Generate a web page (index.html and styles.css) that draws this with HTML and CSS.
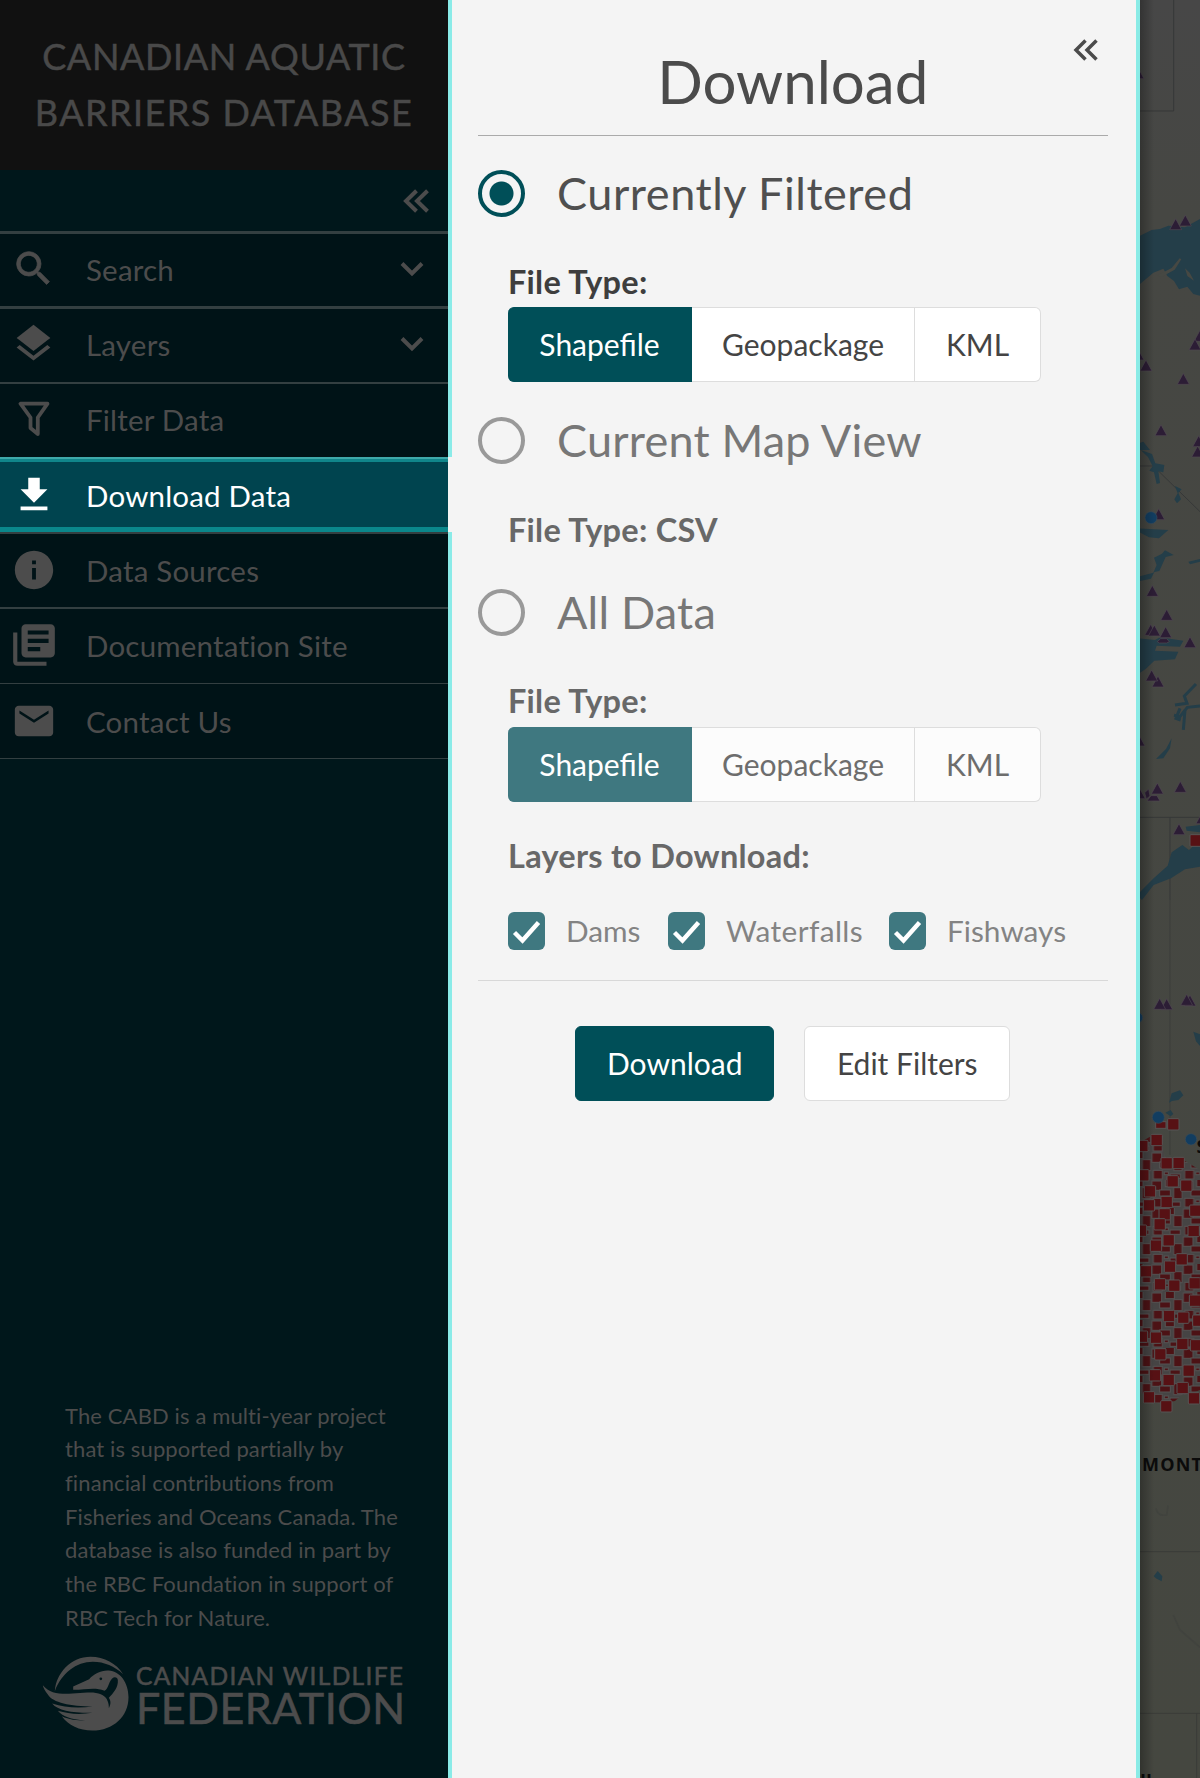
FILE: index.html
```html
<!DOCTYPE html>
<html lang="en">
<head>
<meta charset="utf-8">
<title>Canadian Aquatic Barriers Database</title>
<link rel="stylesheet" href="styles.css">
</head>
<body>
<div class="app">
  <aside class="sidebar">
    <h1 class="brand"><span class="brand-top">CANADIAN AQUATIC</span><span class="brand-bottom">BARRIERS DATABASE</span></h1>
    <div class="collapse">
      <svg width="26" height="24" viewBox="0 0 26 24"><path d="M13.5 1.8 3 12l10.500 10.200M24.500 1.800 14 12l10.500 10.200" fill="none" stroke="currentColor" stroke-width="4"/></svg>
    </div>
    <nav class="menu">
      <a class="item"><span class="icon"><svg width="45" height="45" viewBox="0 0 24 24"><path stroke="currentColor" stroke-width=".4" d="M15.500 14h-.79l-.28-.27A6.471 6.471 0 0 0 16 9.500 6.500 6.500 0 1 0 9.500 16c1.610 0 3.090-.59 4.230-1.570l.27.28v.79l5 4.990L20.490 19l-4.990-5zm-6 0C7.010 14 5 11.990 5 9.500S7.010 5 9.500 5 14 7.010 14 9.500 11.990 14 9.500 14z"/></svg></span><span class="label">Search</span><svg class="chevron" width="24" height="16" viewBox="0 0 24 16"><path d="M2 2.500l10 10 10-10" fill="none" stroke="currentColor" stroke-width="4"/></svg></a>
      <a class="item"><span class="icon"><svg width="45" height="45" viewBox="0 0 24 24"><path d="M11.990 18.540l-7.370-5.730L3 14.070l9 7 9-7-1.630-1.270-7.380 5.740zM12 16l7.360-5.730L21 9l-9-7-9 7 1.630 1.270L12 16z"/></svg></span><span class="label">Layers</span><svg class="chevron" width="24" height="16" viewBox="0 0 24 16"><path d="M2 2.500l10 10 10-10" fill="none" stroke="currentColor" stroke-width="4"/></svg></a>
      <a class="item"><span class="icon"><svg width="32" height="36" viewBox="0 0 32 36"><path d="M2.500 2.700h27L19.800 16.500V33l-7.300-6V16.500z" fill="none" stroke="currentColor" stroke-width="3.800" stroke-linejoin="round"/></svg></span><span class="label">Filter Data</span></a>
      <a class="item active"><span class="icon"><svg width="46" height="46" viewBox="0 0 24 24"><path d="M19 9h-4V3H9v6H5l7 7 7-7zM5 18v2h14v-2H5z"/></svg></span><span class="label">Download Data</span></a>
      <a class="item"><span class="icon"><svg width="46" height="46" viewBox="0 0 24 24"><path d="M12 2C6.480 2 2 6.480 2 12s4.480 10 10 10 10-4.480 10-10S17.520 2 12 2zm1 15h-2v-6h2v6zm0-8h-2V7h2v2z"/></svg></span><span class="label">Data Sources</span></a>
      <a class="item"><span class="icon"><svg width="50" height="50" viewBox="0 0 24 24"><path d="M4 6H2v14c0 1.100.9 2 2 2h14v-2H4V6zm16-4H8c-1.100 0-2 .9-2 2v12c0 1.100.9 2 2 2h12c1.100 0 2-.9 2-2V4c0-1.100-.9-2-2-2zm-1 9H9V9h10v2zm-4 4H9v-2h6v2zm4-8H9V5h10v2z"/></svg></span><span class="label">Documentation Site</span></a>
      <a class="item"><span class="icon"><svg width="46" height="46" viewBox="0 0 24 24"><path d="M20 4H4c-1.100 0-2 .9-2 2v12c0 1.100.9 2 2 2h16c1.100 0 2-.9 2-2V6c0-1.100-.9-2-2-2zm-.4 4.100L12 12.900 4.400 8.100V6.500l7.600 4.800 7.600-4.800z"/></svg></span><span class="label">Contact Us</span></a>
    </nav>
    <div class="about">
      <p>The CABD is a multi-year project<br>that is supported partially by<br>financial contributions from<br>Fisheries and Oceans Canada. The<br>database is also funded in part by<br>the RBC Foundation in support of<br>RBC Tech for Nature.</p>
      <svg class="logo" width="370" height="80" viewBox="0 0 370 80">
        <g transform="translate(-12.500 -6.500) scale(.33333)">
          <path d="M76 140C80 85 125 37 183 37c42 0 77 20 98 52C255 66 225 52 190 52c-50 0-94 35-114 88z"/>
          <path d="M131 126l48-22c14-16 35-27 58-26 36 2 60 38 60 80 0 57-45 100-109 100-38 0-72-16-91-43 20 10 45 13 70 13-44-3-68-12-82-29 32 10 67 12 104 6-58 1-104-6-121-28 38 13 80 15 122 9-68-1-120-11-135-36-8-11-14-20-15-28 18 22 45 27 78 26l56-4c28-2 51 6 58 20 6 11 6 20 6 27 7-14 6-21 0-31 13-14 29-32 27-53 0-8-10-12-17-5-13 14-9 28-23 37-29-12-55-3-94-3z"/>
          <circle cx="214" cy="103" r="4" class="eye"/>
        </g>
        <text x="94" y="34" font-size="24.500" textLength="267" lengthAdjust="spacing">CANADIAN WILDLIFE</text>
        <text x="94" y="72.500" font-size="43" textLength="269" lengthAdjust="spacing">FEDERATION</text>
      </svg>
    </div>
  </aside>

  <main class="panel">
    <div class="panel-head"><h2>Download</h2>
      <svg class="close" width="26" height="22" viewBox="0 0 26 22"><path d="M12.500 1.500 3 11l9.500 9.500M23.500 1.500 14 11l9.500 9.500" fill="none" stroke="currentColor" stroke-width="3.500"/></svg>
    </div>
    <div class="choice on"><span class="radio"></span><span>Currently Filtered</span></div>
    <section class="first">
      <h3>File Type:</h3>
      <div class="group"><button class="primary">Shapefile</button><button>Geopackage</button><button>KML</button></div>
    </section>
    <div class="choice second"><span class="radio"></span><span>Current Map View</span></div>
    <section class="csv dim"><h3>File Type: CSV</h3></section>
    <div class="choice third"><span class="radio"></span><span>All Data</span></div>
    <section class="all dim">
      <h3>File Type:</h3>
      <div class="group"><button class="primary">Shapefile</button><button>Geopackage</button><button>KML</button></div>
      <h3 class="layers-title">Layers to Download:</h3>
      <div class="checks">
        <label class="dams"><span class="box"><svg width="37" height="38" viewBox="0 0 37 38"><path d="M6.500 20.500l8 8L30.500 10.500" fill="none" stroke="#fff" stroke-width="4.400"/></svg></span>Dams</label>
        <label class="falls"><span class="box"><svg width="37" height="38" viewBox="0 0 37 38"><path d="M6.500 20.500l8 8L30.500 10.500" fill="none" stroke="#fff" stroke-width="4.400"/></svg></span>Waterfalls</label>
        <label class="fish"><span class="box"><svg width="37" height="38" viewBox="0 0 37 38"><path d="M6.500 20.500l8 8L30.500 10.500" fill="none" stroke="#fff" stroke-width="4.400"/></svg></span>Fishways</label>
      </div>
    </section>
    <div class="actions"><button class="primary">Download</button><button>Edit Filters</button></div>
  </main>

  <div class="map">
    <svg width="60" height="1778" viewBox="0 0 60 1778">
      <defs>
        <linearGradient id="land" x1="0" y1="0" x2="0" y2="1"><stop offset="0" stop-color="#474747"/><stop offset=".12" stop-color="#464743"/><stop offset="1" stop-color="#454740"/></linearGradient>
        <linearGradient id="shade"><stop offset="0" stop-color="#000" stop-opacity=".28"/><stop offset="1" stop-color="#000" stop-opacity="0"/></linearGradient>
        <path id="t" d="M0-17 18 16H-18z"/>
        <rect id="s" x="-17" y="-17" width="34" height="34" rx="3"/>
        <pattern id="stack" width="94" height="84" patternUnits="userSpaceOnUse">
          <rect width="94" height="84" fill="#464444"/>
          <g fill="#4c1215" stroke="#545252" stroke-width="3"><rect x="2" y="3" width="29" height="28"/><rect x="42" y="-8" width="27" height="28"/><rect x="25" y="30" width="32" height="18"/><rect x="67" y="23" width="25" height="33"/><rect x="6" y="55" width="27" height="26"/><rect x="56" y="66" width="31" height="13"/><rect x="39" y="60" width="12" height="8"/></g>
        </pattern>
      </defs>
      <rect width="60" height="1778" fill="url(#land)"/>
      <g transform="translate(-20 0) scale(.33333)">
        <path d="M161 0V333H55" fill="none" stroke="#363838" stroke-width="3"/>
        <g class="water"><path d="M55 710l40-20 25-3 25-10 50 5 45-25v230l-20-5-18-22-25 8-15-25-20-15-12-22-30 12-45 38z"/><path d="M55 1330l15-5 20 25H55z"/></g>
        <path class="isle" d="M113 826l42-22 24-29 5 3-20 31-40 22zM195 805l14 13 13 24-20-14z"/>
        <g class="violet"><use href="#t" x="167" y="673"/><use href="#t" x="196" y="662"/><use href="#t" x="54" y="220"/><use href="#t" x="240" y="1008"/><use href="#t" x="225" y="1034" /><use href="#t" x="54" y="1064"/><use href="#t" x="78" y="1097"/><use href="#t" x="190" y="1137"/><use href="#t" x="123" y="1291"/><use href="#t" x="236" y="1324"/></g>
      </g>
      <g transform="translate(-20 450) scale(.33333)">
        <path d="M55 48h45L240 185M55 1102h185M150 1102v248" fill="none" stroke="#363838" stroke-width="3"/>
        <g class="water"><path d="M62 0l34 12 10 28 27 5-3 22-15-3 5 35-10 3-8-35-14-5 10-13-14-28zM55 235l90 5-28 25-30-3-32-17zM55 380l45-12 10-23-8-22 24-12 9-10 26 14-24 6-19 42-15 3-10 20-38 8zM165 108l20 10-10 10 8 20-12 12-8-12 10-18zM205 335l35-8v8l-30 8zM55 565l50 5 15-8 70 10-10 18-70-3-5 15 70 3-10 23-62 4-26 25-22 15zM155 865l-5 30-20 30-22 2 30-30zM197 1130l43-5v22l-40-5zM240 1170v80l-45 8-42 27-52 20-35 45-15-15 50-50 42-38 12-40 32-22 20 15z"/></g>
        <path class="stream" d="M228 702l-35 36 8 22-36 5M240 768l-38 4-22 28-18-4M195 780l-5 60M180 775l-12 30 14 5"/>
        <g class="violet"><use href="#t" x="233" y="5"/><use href="#t" x="116" y="193"/><use href="#t" x="97" y="423"/><use href="#t" x="140" y="495"/><use href="#t" x="92" y="540"/><use href="#t" x="103" y="542"/><use href="#t" x="137" y="547"/><use href="#t" x="210" y="577"/><path d="M112 575l10-9h18l8 9-8 4h-22z"/><use href="#t" x="114" y="695"/><use href="#t" x="95" y="677"/><use href="#t" x="57" y="872"/><path d="M74 1028l12-11 4 21-11 9zM81 1053l12-16h18l9 16z"/><use href="#t" x="58" y="1030"/><use href="#t" x="112" y="1016"/><use href="#t" x="181" y="1011"/><use href="#t" x="177" y="1138"/><use href="#t" x="246" y="1105"/></g>
        <circle class="dot" cx="93" cy="203" r="18"/><g class="dam"><rect x="210" y="1154" width="36" height="35" rx="3"/></g>
      </g>
      <g transform="translate(-20 900) scale(.33333)">
        <path d="M150 0v765" stroke="#3c3e3b" stroke-width="3"/>
        <g class="water"><path d="M147 608l8-28 25-9 10 15-15 14-19 3zM220 395l20 8v35l-12-14zM136 638l16-8 8 12-8 7z"/></g>
        <g class="violet"><use href="#t" x="140" y="313"/><use href="#t" x="119" y="312"/><use href="#t" x="210" y="302"/><use href="#t" x="200" y="300"/></g>
        <path fill="url(#stack)" d="M55 730l35-20h30l15 60 55 10 50 30v660l-25 10-30 5-20 18-35 10-25-5-15-20-35-10z"/>
        <g class="dam"><rect x="107" y="665" width="31" height="20"/><use href="#s" x="160" y="673"/><use href="#s" x="110" y="720"/><use href="#s" x="67" y="738"/><use href="#s" x="176" y="789"/><use href="#s" x="140" y="790"/><use href="#s" x="70" y="826"/><use href="#s" x="158" y="844"/><use href="#s" x="199" y="857"/><use href="#s" x="90" y="874"/><use href="#s" x="87" y="916"/><use href="#s" x="140" y="906"/><use href="#s" x="134" y="943"/><use href="#s" x="226" y="932"/><use href="#s" x="119" y="973"/><use href="#s" x="63" y="992"/><use href="#s" x="221" y="993"/><use href="#s" x="146" y="1021"/><use href="#s" x="108" y="1037"/><use href="#s" x="185" y="1078"/><use href="#s" x="150" y="1100"/><use href="#s" x="78" y="1114"/><use href="#s" x="224" y="1150"/><use href="#s" x="120" y="1153"/><use href="#s" x="163" y="1157"/><use href="#s" x="225" y="1202"/><use href="#s" x="147" y="1248"/><use href="#s" x="190" y="1253"/><use href="#s" x="235" y="1262"/><use href="#s" x="66" y="1310"/><use href="#s" x="108" y="1313"/><use href="#s" x="187" y="1332"/><use href="#s" x="228" y="1336"/><use href="#s" x="121" y="1363"/><use href="#s" x="206" y="1412"/><use href="#s" x="105" y="1426"/><use href="#s" x="146" y="1440"/><use href="#s" x="188" y="1464"/><use href="#s" x="87" y="1492"/><use href="#s" x="222" y="1495"/><use href="#s" x="139" y="1519"/></g>
        <circle class="dot" cx="115" cy="652" r="18"/><circle class="dot" cx="213" cy="718" r="17"/><circle class="dot" cx="52" cy="353" r="16"/>
      </g>
      <g transform="translate(-20 1340) scale(.33333)">
        <path d="M55 635h185M55 1120h185M230 1120v194" fill="none" stroke="#3a3c38" stroke-width="3"/>
        <path d="M108 505q5 25 32 20l4-28M160 825l20 45 60 52" fill="none" stroke="#41433e" stroke-width="5"/>
        <path class="water" d="M101 709l12-16 14 16-2 15-15-8z"/>
      </g>
      <text class="place" x="2" y="1470.500" textLength="60">MONT</text>
      <text class="place" x="56.500" y="1153">S</text>
      <text class="place" x="0" y="1787">II</text>
      <rect width="14" height="1778" fill="url(#shade)"/>
    </svg>
  </div>
</div>
</body>
</html>
```
FILE: styles.css
```css
* { box-sizing: border-box; }
body { margin: 0; font-family: Lato, "Open Sans", sans-serif; background: #f4f4f4; }
h1, h2, h3, p { margin: 0; font-weight: 400; }
svg { display: block; fill: currentColor; flex: none; }
.app { display: flex; width: 1200px; height: 1778px; overflow: hidden; }

.sidebar { width: 452px; height: 1778px; display: flex; flex-direction: column; background: #00171b; color: #4c4c4c; }
.brand, .collapse, .item, .about { border-right: 4px solid #8aebe8; }
.brand { height: 170px; flex: none; padding-top: 28px; background: #111; color: #494949; font-size: 36px; line-height: 56px; -webkit-text-stroke: .5px #494949; display: flex; flex-direction: column; align-items: center; white-space: nowrap; }
.brand-top { letter-spacing: .65px; }
.brand-bottom { letter-spacing: 1.450px; }
.collapse { height: 61px; flex: none; display: flex; justify-content: flex-end; padding: 19px 19px 0 0; }
.menu { background: #001317; display: flex; flex-direction: column; flex: none; }
.item { height: 75.300px; box-shadow: inset 0 3px #333f41; display: flex; align-items: center; font-size: 29.500px; letter-spacing: .2px; line-height: 72px; padding: 2px 24px 0 0; }
.item:nth-child(n+3) { box-shadow: inset 0 2px #333f41; }
.item:last-child { box-shadow: inset 0 1px #333f41, inset 0 -1px #333f41; height: 76.300px; }
.icon { width: 67px; display: flex; justify-content: center; margin-right: 19px; padding-bottom: 2px; }
.label { flex: 1; white-space: nowrap; }
.chevron { margin-top: -2px; }
.item.active { background: #00444f; color: #fff; border-right-color: #f4f4f4; box-shadow: inset 0 2px #3fa9aa, inset 0 5px #10868b, inset 0 -5px #0a878b; }
.about { flex: 1; display: flex; flex-direction: column; justify-content: flex-end; padding: 0 0 47px 42px; }
.about p { padding-left: 23px; font-size: 22px; letter-spacing: .12px; line-height: 33.670px; white-space: nowrap; margin-bottom: 16.500px; }
.logo { overflow: visible; }
.logo text { font-family: Lato, sans-serif; stroke: currentColor; stroke-width: .6px; }
.eye { fill: #00171b; }

.panel { width: 688px; padding: 45px 28.500px 0 26px; border-right: 4px solid #8aebe6; background: #f4f4f4; color: #4b4b4b; }
.panel-head { position: relative; height: 91px; border-bottom: 1px solid #aaa; text-align: center; }
.panel-head h2 { font-size: 60px; line-height: 72px; }
.close { position: absolute; right: 9px; top: -6px; }
.choice { display: flex; align-items: center; gap: 32px; height: 47px; font-size: 45px; line-height: 47px; color: #777; white-space: nowrap; letter-spacing: .2px; }
.choice.on { margin-top: 34px; color: #4f4f4f; letter-spacing: .55px; }
.second { margin-top: 35px; }
.third { margin-top: 40px; }
.radio { width: 47px; height: 47px; flex: none; border: 4px solid #999; border-radius: 50%; }
.on .radio { border-color: #004f58; background: radial-gradient(circle, #004f58 11.500px, #f4f4f4 12.500px); }
section { padding-left: 30px; }
.first { margin-top: 46px; }
.csv { margin-top: 47px; }
.all { margin-top: 46px; }
h3 { height: 38px; font-size: 32.500px; letter-spacing: .25px; line-height: 38px; font-weight: 700; color: #3e3e3e; white-space: nowrap; }
.dim h3 { color: #686868; }
button { height: 75px; font: 30px/73px Lato, sans-serif; color: #444; background: #fff; border: 1px solid #ddd; border-radius: 6px; padding: 0; white-space: nowrap; }
.group { display: flex; margin-top: 6px; }
.group button { border-radius: 0; border-left-width: 0; }
.group button:first-child { border-radius: 6px 0 0 6px; width: 184px; }
.group button:nth-child(2) { width: 223px; }
.group button:last-child { border-radius: 0 6px 6px 0; width: 126px; }
button.primary { background: #004f58; color: #fff; border-color: #004f58; }
.dim .group { margin-top: 7px; }
.dim button { background: #fcfcfc; color: #6d6d6d; }
.dim button.primary { background: #3f7880; border-color: #3f7880; color: #fff; }
.layers-title { margin-top: 35px; }
.checks { display: flex; margin-top: 37px; font-size: 29.800px; line-height: 38px; color: #838383; white-space: nowrap; }
.checks label { display: flex; gap: 21px; }
.dams { width: 160px; }
.falls { width: 221px; letter-spacing: .4px; }
.box { width: 37px; height: 38px; flex: none; border-radius: 6px; background: #3f7880; }
.actions { display: flex; justify-content: center; gap: 30px; margin-top: 30px; padding-top: 45px; border-top: 1px solid #d8d8d8; }
.actions button { width: 206px; }
.actions .primary { width: 199px; }

.map { width: 60px; height: 1778px; overflow: hidden; }
.water { fill: #243e49; }
.stream { fill: none; stroke: #243e49; stroke-width: 9; }
.isle { fill: #464843; }
.violet { fill: #2c1d35; stroke: #504852; stroke-width: 2; }
.dot { fill: #123d60; stroke: #394b57; stroke-width: 2; }
.dam { fill: #571114; stroke: #575555; stroke-width: 3; }
.place { font: 700 18px "Open Sans", sans-serif; fill: #0b0b0b; }
```
